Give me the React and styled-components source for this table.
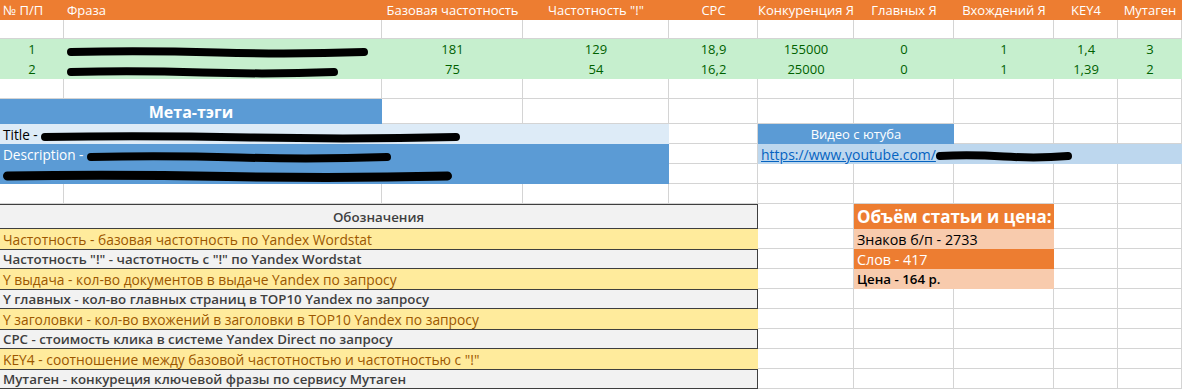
import React from 'react';
import styled, { createGlobalStyle } from 'styled-components';

// данные листа
const COLS = [64, 318, 141, 146, 89, 96, 100, 100, 64, 64];
const ROWS = [20, 19, 20, 20, 20, 25, 20, 20, 20, 20, 25, 20, 20, 20, 20, 20, 20, 20, 20];

const HEADERS = [
  { text: '№ П/П', align: 'left' },
  { text: 'Фраза', align: 'left' },
  { text: 'Базовая частотность' },
  { text: 'Частотность "!"' },
  { text: 'CPC' },
  { text: 'Конкуренция Я' },
  { text: 'Главных Я' },
  { text: 'Вхождений Я' },
  { text: 'KEY4' },
  { text: 'Мутаген' },
];

const KEYWORDS = [
  { n: 1, phrase: 301, values: ['181', '129', '18,9', '155000', '0', '1', '1,4', '3'] },
  { n: 2, phrase: 271, values: ['75', '54', '16,2', '25000', '0', '1', '1,39', '2'] },
];

const LEGEND = [
  { text: 'Частотность - базовая частотность по Yandex Wordstat', kind: 'neutral' },
  { text: 'Частотность "!" - частотность с "!" по Yandex Wordstat', kind: 'output' },
  { text: 'Y выдача - кол-во документов в выдаче Yandex по запросу', kind: 'neutral' },
  { text: 'Y главных - кол-во главных страниц в TOP10 Yandex по запросу', kind: 'output' },
  { text: 'Y заголовки - кол-во вхожений в заголовки в TOP10 Yandex по запросу', kind: 'neutral' },
  { text: 'CPC - стоимость клика в системе Yandex Direct по запросу', kind: 'output' },
  { text: 'KEY4 - соотношение между базовой частотностью и частотностью с "!"', kind: 'neutral' },
  { text: 'Мутаген - конкуреция ключевой фразы по сервису Мутаген', kind: 'output' },
];

const PRICE = [
  { text: 'Знаков б/п - 2733', fill: '#f8cbad', color: '#000' },
  { text: 'Слов - 417', fill: '#ed7d31', color: '#fff' },
  { text: 'Цена - 164 р.', fill: '#f8cbad', color: '#000', bold: true },
];

const C = {
  orange: '#ed7d31',
  green: '#c6efce',
  greenText: '#006100',
  blue: '#5b9bd5',
  blueLight: '#ddebf7',
  blueMid: '#bdd7ee',
  grid: '#d4d4d4',
};

// закрашенная полоса поверх скрытого текста
const Redact = ({ w, y = 13, thick = 8 }) => (
  <Scribble width={w} height={20} viewBox={`0 0 ${w} 20`}>
    <path
      d={`M${thick / 2} ${y} Q ${w * 0.25} ${y - 1.5} ${w * 0.5} ${y + 0.5} T ${w - thick / 2} ${y}`}
      stroke="#000"
      strokeWidth={thick}
      strokeLinecap="round"
      fill="none"
    />
  </Scribble>
);

const Blank = ({ count }) =>
  Array.from({ length: count }).map((_, i) => <Cell key={i} />);

function App() {
  return (
    <>
      <GlobalStyle />
      <Sheet>
        {/* шапка */}
        {HEADERS.map((h, i) => (
          <Cell key={i} $fill={C.orange} $color="#fff" $align={h.align || 'center'}>
            {h.text}
          </Cell>
        ))}
        <Blank count={10} />

        {/* ключевые фразы */}
        {KEYWORDS.map((row) => (
          <React.Fragment key={row.n}>
            <Cell $fill={C.green} $color={C.greenText} $align="center">{row.n}</Cell>
            <Cell $fill={C.green}><Redact w={row.phrase} /></Cell>
            {row.values.map((v, i) => (
              <Cell key={i} $fill={C.green} $color={C.greenText} $align="center">{v}</Cell>
            ))}
          </React.Fragment>
        ))}
        <Blank count={10} />

        {/* мета-тэги */}
        <Cell $span={2} $fill={C.blue} $color="#fff" $bold $size={16} $align="center">Мета-тэги</Cell>
        <Blank count={8} />

        <Cell $span={4} $fill={C.blueLight} $size={13.6}>Title -&nbsp;<Redact w={419} /></Cell>
        <Cell />
        <Cell $span={2} $fill={C.blue} $color="#fff" $align="center">Видео с ютуба</Cell>
        <Blank count={3} />

        <Cell $span={4} $fill={C.blue} $color="#fff" $size={13.6}>Description -&nbsp;<Redact w={304} /></Cell>
        <Cell />
        <Cell $span={5} $fill={C.blueMid} $size={14}>
          <Link href="#">https://www.youtube.com/</Link>
          <Redact w={136} y={12} />
        </Cell>

        <Cell $span={4} $fill={C.blue} $color="#fff"><Redact w={449} y={12} thick={9} /></Cell>
        <Blank count={6} />

        <Blank count={10} />

        {/* обозначения и цена */}
        <LegendCell $span={5} $kind="head" $align="center">Обозначения</LegendCell>
        <Cell />
        <Cell $span={2} $fill={C.orange} $color="#fff" $bold $size={17}>Объём статьи и цена:</Cell>
        <Blank count={2} />

        {LEGEND.map((item, i) => (
          <React.Fragment key={i}>
            <LegendCell $span={5} $kind={item.kind}>{item.text}</LegendCell>
            <Cell />
            {PRICE[i] ? (
              <Cell
                $span={2}
                $fill={PRICE[i].fill}
                $color={PRICE[i].color}
                $bold={PRICE[i].bold}
                $weight={PRICE[i].bold ? 650 : 400}
                $size={PRICE[i].bold ? 13.3 : 14.3}
              >
                {PRICE[i].text}
              </Cell>
            ) : (
              <Blank count={2} />
            )}
            <Blank count={2} />
          </React.Fragment>
        ))}
      </Sheet>
    </>
  );
}

// --- стили ---

const GlobalStyle = createGlobalStyle`
  *, *::before, *::after { box-sizing: border-box; }
  html, body { margin: 0; padding: 0; background: #fff; overflow: hidden; }
  body { font-family: 'Open Sans', 'Liberation Sans', sans-serif; }
`;

const Sheet = styled.div`
  display: grid;
  grid-template-columns: ${COLS.map((c) => `${c}px`).join(' ')};
  grid-template-rows: ${ROWS.map((r) => `${r}px`).join(' ')};
  width: 1182px;
`;

const Cell = styled.div`
  grid-column: span ${(p) => p.$span || 1};
  display: flex;
  align-items: center;
  justify-content: ${(p) => (p.$align === 'center' ? 'center' : 'flex-start')};
  padding: 0 3px;
  min-width: 0;
  white-space: nowrap;
  background: ${(p) => p.$fill || '#fff'};
  color: ${(p) => p.$color || '#000'};
  font-size: ${(p) => p.$size || 13}px;
  font-weight: ${(p) => p.$weight || (p.$bold ? 700 : 400)};
  ${(p) => !p.$fill && `border-right: 1px solid ${C.grid}; border-bottom: 1px solid ${C.grid};`}
`;

const LegendCell = styled(Cell)`
  border-right: 1px solid ${(p) => (p.$kind === 'neutral' ? 'transparent' : '#3f3f3f')};
  background: ${(p) => (p.$kind === 'neutral' ? '#ffeb9c' : '#f2f2f2')};
  color: ${(p) => (p.$kind === 'neutral' ? '#9c5700' : '#3f3f3f')};
  font-weight: ${(p) => (p.$kind === 'neutral' ? 400 : 650)};
  font-size: ${(p) => (p.$kind === 'neutral' ? 13.8 : 13.3)}px;
  border-top: ${(p) => (p.$kind === 'neutral' ? 'none' : '1px solid #3f3f3f')};
  border-bottom: ${(p) => (p.$kind === 'neutral' ? 'none' : '1px solid #3f3f3f')};
`;

const Link = styled.a`
  color: #0563c1;
  text-decoration: underline;
`;

const Scribble = styled.svg`
  flex: none;
  display: block;
  overflow: visible;
`;

export default App;
